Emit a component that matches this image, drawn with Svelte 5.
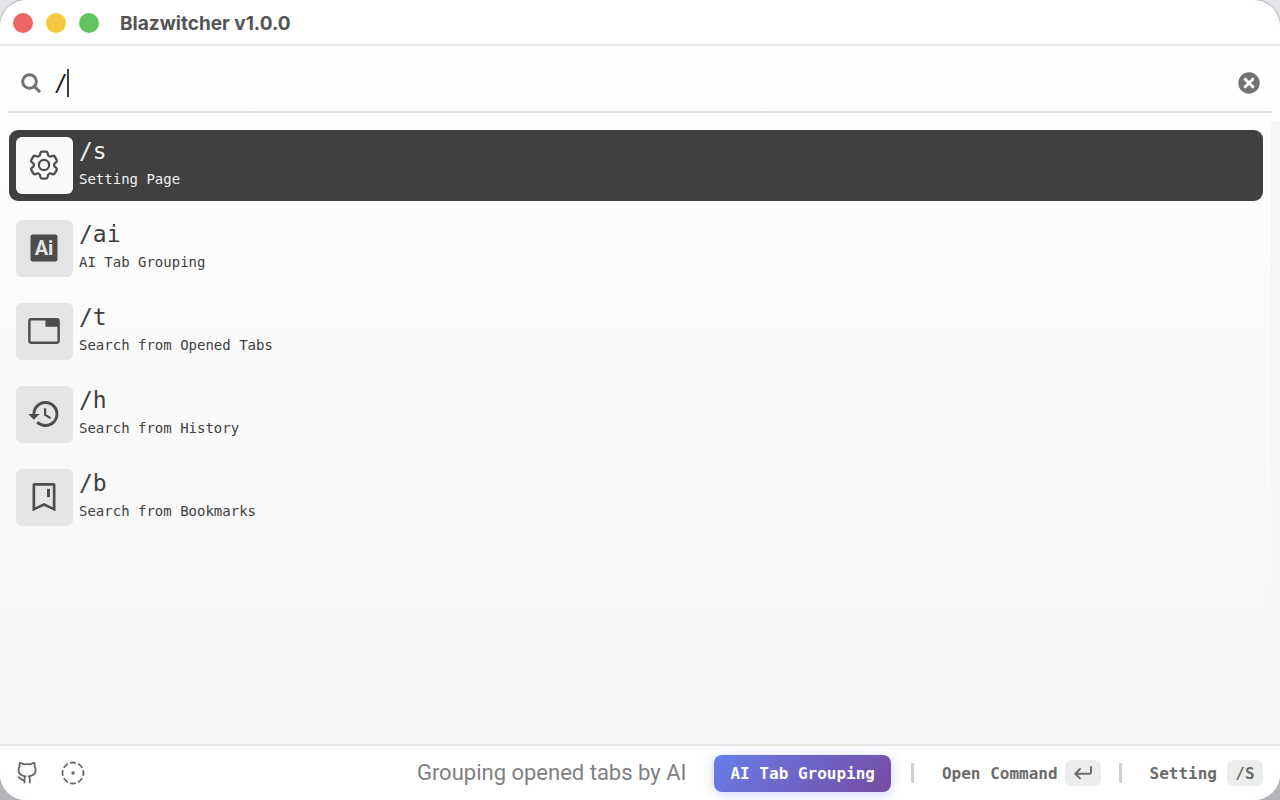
<script>
  let query = $state('/');
  let selected = $state(0);

  const commands = [
    { key: '/s', label: 'Setting Page', icon: 'gear' },
    { key: '/ai', label: 'AI Tab Grouping', icon: 'ai' },
    { key: '/t', label: 'Search from Opened Tabs', icon: 'tab' },
    { key: '/h', label: 'Search from History', icon: 'history' },
    { key: '/b', label: 'Search from Bookmarks', icon: 'bookmark' }
  ];
</script>

<div class="window">
  <header>
    <div class="lights">
      <button class="light red" aria-label="Close"></button>
      <button class="light yellow" aria-label="Minimize"></button>
      <button class="light green" aria-label="Zoom"></button>
    </div>
    <h1>Blazwitcher v1.0.0</h1>
  </header>

  <div class="content">
    <div class="search">
      <svg class="glass" viewBox="0 0 20 20" aria-hidden="true">
        <circle cx="8.5" cy="8.5" r="6.8" />
        <path d="M13.6 13.6 18.2 18.2" />
      </svg>
      <div class="field">
        <input type="text" aria-label="Search" bind:value={query} />
        <span class="caret"></span>
      </div>
      <button class="clear" aria-label="Clear" onclick={() => (query = '')}>
        <svg viewBox="0 0 22 22" aria-hidden="true">
          <circle cx="11" cy="11" r="10.7" />
          <path d="M7.2 7.2 14.8 14.8M14.8 7.2 7.2 14.8" />
        </svg>
      </button>
    </div>

    <div class="results">
      <ul>
        {#each commands as command, i}
          <li>
            <button class="row" class:active={selected === i} onclick={() => (selected = i)}>
              <span class="tile">
                {#if command.icon === 'gear'}
                  <svg viewBox="0 0 24 24" class="line" aria-hidden="true">
                    <path d="M9.594 3.94c.09-.542.56-.94 1.11-.94h2.593c.55 0 1.02.398 1.11.94l.213 1.281c.063.374.313.686.645.87.074.04.147.083.22.127.325.196.72.257 1.075.124l1.217-.456a1.125 1.125 0 0 1 1.37.49l1.296 2.247a1.125 1.125 0 0 1-.26 1.431l-1.003.827c-.293.241-.438.613-.43.992a7.723 7.723 0 0 1 0 .255c-.008.378.137.75.43.991l1.004.827c.424.35.534.955.26 1.43l-1.298 2.247a1.125 1.125 0 0 1-1.369.491l-1.217-.456c-.355-.133-.75-.072-1.076.124a6.47 6.47 0 0 1-.22.128c-.331.183-.581.495-.644.869l-.213 1.281c-.09.543-.56.94-1.11.94h-2.594c-.55 0-1.019-.398-1.11-.94l-.213-1.281c-.062-.374-.312-.686-.644-.87a6.52 6.52 0 0 1-.22-.127c-.325-.196-.72-.257-1.076-.124l-1.217.456a1.125 1.125 0 0 1-1.369-.49l-1.297-2.247a1.125 1.125 0 0 1 .26-1.431l1.004-.827c.292-.24.437-.613.43-.991a6.932 6.932 0 0 1 0-.255c.007-.38-.138-.751-.43-.992l-1.004-.827a1.125 1.125 0 0 1-.26-1.43l1.297-2.247a1.125 1.125 0 0 1 1.37-.491l1.216.456c.356.133.751.072 1.076-.124.072-.044.146-.086.22-.128.332-.183.582-.495.644-.869l.214-1.28Z" />
                    <circle cx="12" cy="12" r="3.400" />
                  </svg>
                {:else if command.icon === 'ai'}
                  <svg viewBox="0 0 36 36" aria-hidden="true">
                    <rect x="4.5" y="4.5" width="27" height="27" rx="2" />
                    <text x="18" y="25" text-anchor="middle">Ai</text>
                  </svg>
                {:else if command.icon === 'tab'}
                  <svg viewBox="0 0 25 25" aria-hidden="true">
                    <path d="M21.500 3.500H3.500c-1.100 0-2 .9-2 2v14c0 1.100.9 2 2 2h18c1.100 0 2-.9 2-2v-14c0-1.100-.9-2-2-2zm.3 16.300H3.200V5.200h10.300v4.300h8.300z" />
                  </svg>
                {:else if command.icon === 'history'}
                  <svg viewBox="-.5 -.5 25 25" aria-hidden="true">
                    <path d="M13 3a9 9 0 0 0-9 9H1l3.890 3.890.07.14L9 12H6c0-3.870 3.130-7 7-7s7 3.130 7 7-3.130 7-7 7c-1.930 0-3.680-.79-4.940-2.060l-1.420 1.420A8.954 8.954 0 0 0 13 21a9 9 0 0 0 0-18zm-1 5v5l4.280 2.540.72-1.210-3.500-2.080V8H12z" />
                  </svg>
                {:else}
                  <svg viewBox="0 0 36 36" aria-hidden="true">
                    <path d="M8.300 4h19.400a1.800 1.800 0 0 1 1.800 1.800V32.300L18 27 6.500 32.300V5.800A1.800 1.800 0 0 1 8.300 4zM9.200 6.700V28.200L18 24.100l8.800 4.100V6.700z" fill-rule="evenodd" />
                    <path d="M21 9.800h3v8.400h-3z" />
                  </svg>
                {/if}
              </span>
              <span class="words">
                <span class="key">{command.key}</span>
                <span class="label">{command.label}</span>
              </span>
            </button>
          </li>
        {/each}
      </ul>
      <div class="track"></div>
    </div>
  </div>

  <footer>
    <nav>
      <a href="#github" aria-label="GitHub">
        <svg viewBox="0 0 24 24" aria-hidden="true">
          <path d="M9.500 22.300v-4.800c0-.9.2-1.600.7-2.200C6.300 14.600 3.500 12.600 3.500 8.900c0-1.300.4-2.400 1.200-3.300-.3-1.300-.2-2.500.2-3.700 1.500.1 2.800.7 4 1.500 2.100-.4 4.300-.4 6.400 0 1.200-.8 2.500-1.400 4-1.500.4 1.200.5 2.400.2 3.700.8.9 1.200 2 1.200 3.300 0 3.700-2.800 5.700-6.700 6.400.5.600.8 1.300.8 2.200v4.800M9.500 19.300C5.900 19.800 5.800 16.700 3 15.900" />
        </svg>
      </a>
      <a href="#changelog" aria-label="Changelog">
        <svg viewBox="0 0 24 24" aria-hidden="true">
          <circle cx="12" cy="12" r="10.500" pathLength="80" stroke-dasharray="7 3" stroke-dashoffset="3.500" />
          <circle class="dot" cx="12" cy="12" r="1.700" />
        </svg>
      </a>
    </nav>
    <span class="hint">Grouping opened tabs by AI</span>
    <button class="primary">AI Tab Grouping</button>
    <span class="bar"></span>
    <button class="action open">
      Open Command
      <kbd>
        <svg viewBox="0 0 20 16" aria-hidden="true">
          <path d="M18 2v5.200a1.500 1.500 0 0 1-1.500 1.500H2.500M7 4 2.300 8.700 7 13.400" />
        </svg>
      </kbd>
    </button>
    <span class="bar"></span>
    <button class="action">Setting <kbd>/S</kbd></button>
  </footer>
</div>

<style>
  :global(body) {
    margin: 0;
    background: linear-gradient(#e4e4ea, #b4b4b9);
  }
  * {
    box-sizing: border-box;
  }
  button {
    padding: 0;
    border: 0;
    background: none;
    font: inherit;
    color: inherit;
  }
  .window {
    display: flex;
    flex-direction: column;
    min-height: 100vh;
    overflow: hidden;
    border-radius: 26px;
    background: #fff;
    box-shadow: 0 0 1px 1px #b4b4b8;
    color: #404040;
    font-family: 'DejaVu Sans Mono', monospace;
  }
  header {
    display: flex;
    align-items: center;
    gap: 21px;
    height: 46px;
    padding: 2px 13px 0;
    border-bottom: 2px solid #e8e8e8;
  }
  .lights {
    display: flex;
    gap: 13px;
  }
  .light {
    width: 20px;
    height: 20px;
    border-radius: 50%;
  }
  .red {
    background: #ed6664;
  }
  .yellow {
    background: #f3c940;
  }
  .green {
    background: #62c463;
  }
  h1 {
    margin: 0;
    padding-top: 1px;
    color: #555;
    font: 700 19px/24px Inter, sans-serif;
  }
  .content {
    display: flex;
    flex: 1;
    flex-direction: column;
    background: linear-gradient(#fff, #f5f5f5);
  }
  .search {
    display: flex;
    align-items: center;
    height: 67px;
    margin: 0 8px;
    padding: 8px 12px 0 13px;
    border-bottom: 2px solid #e3e3e3;
  }
  .glass {
    width: 20px;
    height: 20px;
    fill: none;
    stroke: #707274;
    stroke-width: 3;
    stroke-linecap: round;
  }
  .field {
    position: relative;
    flex: 1;
    margin-left: 13px;
  }
  input {
    display: block;
    width: 100%;
    padding: 0;
    border: 0;
    outline: 0;
    background: none;
    color: #1c1f23;
    font: 400 23px/32px 'DejaVu Sans Mono', monospace;
  }
  .caret {
    position: absolute;
    top: 2px;
    left: 13px;
    width: 2px;
    height: 28px;
    background: #3c3f43;
  }
  .clear,
  .clear svg {
    display: block;
    width: 22px;
    height: 22px;
  }
  .clear circle {
    fill: #707274;
  }
  .clear path {
    stroke: #fff;
    stroke-width: 3;
    stroke-linecap: round;
  }
  .results {
    display: flex;
    flex: 1;
    padding-top: 8px;
  }
  ul {
    display: flex;
    flex: 1;
    flex-direction: column;
    gap: 12px;
    margin: 0;
    padding: 9px 8px 9px 9px;
    list-style: none;
  }
  .track {
    width: 9px;
    border-radius: 3px 0 0 0;
    background: #f5f5f5;
  }
  .row {
    display: flex;
    align-items: center;
    gap: 6px;
    width: 100%;
    height: 71px;
    padding: 7px;
    border-radius: 9px;
    text-align: left;
  }
  .row.active {
    background: #404040;
    color: #f0f0f0;
  }
  .tile {
    display: grid;
    place-items: center;
    width: 57px;
    height: 57px;
    padding: 0 1px 1px 0;
    border-radius: 6px;
    background: #e5e5e5;
  }
  .active .tile {
    background: #fafafa;
  }
  .tile svg {
    width: 36px;
    height: 36px;
    fill: #4d4d4d;
  }
  .tile .line {
    fill: none;
    stroke: #4d4d4d;
    stroke-width: 1.5;
  }
  .tile text {
    fill: #e5e5e5;
    font: 700 20px Roboto, sans-serif;
  }
  .words {
    display: flex;
    flex-direction: column;
    gap: 2px;
    padding-bottom: 3px;
  }
  .key {
    font-size: 23px;
    line-height: 28px;
  }
  .label {
    font-size: 14px;
    line-height: 24px;
  }
  footer {
    display: flex;
    align-items: center;
    height: 56px;
    padding: 0 17px 0 15px;
    border-top: 2px solid #e6e6e6;
    background: #fff;
    color: #6b6b6b;
    font-size: 16px;
    font-weight: 700;
    white-space: nowrap;
  }
  nav {
    display: flex;
    gap: 22px;
    margin-right: auto;
  }
  nav a,
  nav svg {
    display: block;
    width: 24px;
    height: 24px;
  }
  nav svg {
    fill: none;
    stroke: #666;
    stroke-width: 1.8;
  }
  nav .dot {
    fill: #666;
    stroke: none;
  }
  .hint {
    margin-right: 28px;
    color: #808080;
    font: 400 22px/28px Roboto, sans-serif;
  }
  .primary {
    height: 37px;
    padding: 0 16px;
    border-radius: 8px;
    background: linear-gradient(135deg, #667eea, #764ba2);
    box-shadow: 0 2px 12px #667eea55;
    color: #fff;
  }
  .bar {
    width: 3px;
    height: 20px;
    margin: 0 28px 0 20px;
    border-radius: 1px;
    background: #cfcfcf;
  }
  .action {
    display: flex;
    align-items: center;
    gap: 10px;
  }
  .open {
    gap: 7px;
  }
  .open + .bar {
    margin-left: 18px;
  }
  kbd {
    display: grid;
    place-items: center;
    min-width: 36px;
    height: 26px;
    border-radius: 6px;
    background: #eceeed;
    font: inherit;
  }
  kbd svg {
    width: 20px;
    height: 16px;
    fill: none;
    stroke: #6b6b6b;
    stroke-width: 2;
    stroke-linecap: round;
    stroke-linejoin: round;
  }
</style>
